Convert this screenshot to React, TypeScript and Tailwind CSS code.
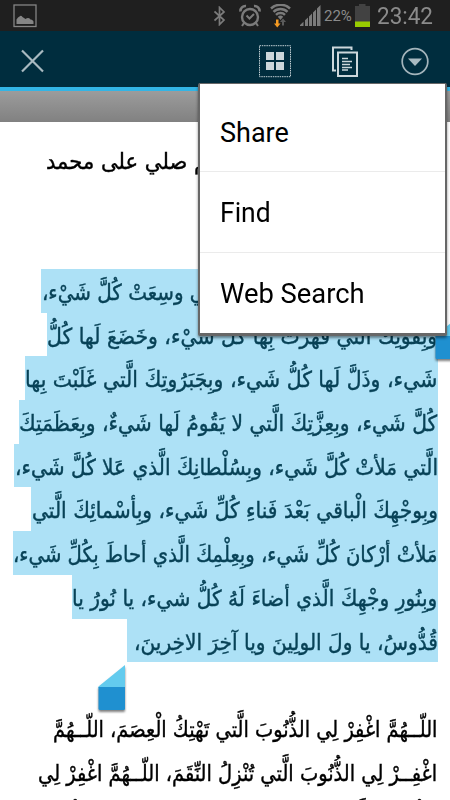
import { ReactNode, useLayoutEffect, useRef, useState } from 'react';
import clsx from 'clsx';

type Line = {
    text: string;
    row: string;
    width: number;
};

const STYLES = {
    arabic: "font-['DejaVu_Sans',sans-serif] text-[22px] leading-[48px] [-webkit-text-stroke:0.4px_currentColor]",
    selectedRow: 'ml-auto h-[43.7px] bg-[#ade1f6] text-[#084257]',
    iconStroke: 'shrink-0 text-[#7b7b7b]',
};

const SELECTED: Line[] = [
    { text: 'اللّـهُمَّ إنّي أسْألُكَ بِرَحْمَتِكَ الَّتي وسِعَتْ كُلَّ شَيْء،', row: 'w-[397px]', width: 396 },
    { text: 'وبِقُوَّتِكَ الَّتي قَهَرْتَ بِها كُلَّ شَيْء، وخَضَعَ لَها كُلُّ', row: 'w-[391px]', width: 390 },
    { text: 'شَيء، وذَلَّ لَها كُلُّ شَيء، وبِجَبَرُوتِكَ الَّتي غَلَبْتَ بِها', row: 'w-[413px]', width: 412 },
    { text: 'كُلَّ شَيء، وبِعِزَّتِكَ الَّتي لا يَقُومُ لَها شَيءٌ، وبِعَظَمَتِكَ', row: 'w-[419px]', width: 418 },
    { text: 'الَّتي مَلأتْ كُلَّ شَيء، وبِسُلْطانِكَ الَّذي عَلا كُلَّ شَيء،', row: 'w-[424px]', width: 423 },
    { text: 'وبِوجْهِكَ الْباقي بَعْدَ فَناءِ كُلِّ شَيء، وبِأسْمائِكَ الَّتي', row: 'w-[407px]', width: 406 },
    { text: 'مَلأتْ أرْكانَ كُلِّ شَيء، وبِعِلْمِكَ الَّذي أحاطَ بِكُلِّ شَيء،', row: 'w-[425px]', width: 424 },
    { text: 'وبِنُورِ وجْهِكَ الَّذي أضاءَ لَهُ كُلُّ شيء، يا نُورُ يا', row: 'w-[366px]', width: 365 },
    { text: 'قُدُّوسُ، يا ولَ الولِينَ ويا آخِرَ الاخِرينَ،', row: 'w-[311px]', width: 304 },
];

const FOLLOWING: Line[] = [
    { text: 'اللّــهُمَّ اغْفِرْ لِي الذُّنُوبَ الَّتي تَهْتِكُ الْعِصَمَ، اللّــهُمَّ', row: 'h-[43.7px]', width: 384 },
    { text: 'اغْفِــرْ لِي الذُّنُوبَ الَّتي تُنْزِلُ النِّقَمَ، اللّــهُمَّ اغْفِرْ لِي', row: 'h-[44px]', width: 399 },
    { text: 'الذُّنُوبَ الَّتي تُغَيِّرُ النِّعَمَ، اللّــهُمَّ اغْفِرْ لي الذُّنُوبَ', row: 'h-[43.7px]', width: 404 },
];

const MENU = [
    { label: 'Share', width: 69, row: 'h-[87px] pt-[11px]' },
    { label: 'Find', width: 51, row: 'h-[81px] border-t border-[#ebebeb] pt-[3px]' },
    { label: 'Web Search', width: 145, row: 'h-[81px] border-t border-[#ebebeb] pt-[3px]' },
];

// Squeezes or stretches one line of text to a fixed width
function FitText({ width, rtl, children }: { width: number; rtl?: boolean; children: ReactNode }) {
    const ref = useRef<HTMLSpanElement>(null);
    const [scale, setScale] = useState(1);

    useLayoutEffect(() => {
        const measure = () => {
            if (ref.current) setScale(width / ref.current.offsetWidth);
        };
        measure();
        document.fonts.ready.then(measure);
    }, [width]);

    return (
        <span
            ref={ref}
            className={clsx('inline-block whitespace-nowrap', rtl ? 'origin-right' : 'origin-left')}
            style={{ transform: `scaleX(${scale})` }}
        >
            {children}
        </span>
    );
}

function StatusBar() {
    return (
        <header className="flex h-[31px] items-center bg-[#1f1f1f] pl-[13px] font-[Roboto,sans-serif] text-[#8b8b8b]">
            <svg width="24" height="24" viewBox="0 0 24 24" fill="none" className="shrink-0 text-[#858585]">
                <rect x="1" y="1" width="22" height="21.5" stroke="currentColor" strokeWidth="1.3" />
                <path d="M3.500 20v-4.500Q5 13 6.500 12.500Q8 11 9.500 13L12.500 15Q15.500 13 17.500 15.500Q20.500 16 20.500 18V20z" fill="currentColor" />
            </svg>
            <svg width="12" height="20" viewBox="0 0 12 20" fill="none" stroke="currentColor" strokeWidth="1.7" className={clsx(STYLES.iconStroke, 'ml-[177px]')}>
                <path d="M0.500 5.5l9.5 8.5L5.500 18.5V1.5L10 6 0.500 14.500" />
            </svg>
            <svg width="22" height="24" viewBox="0 0 22 24" fill="none" stroke="currentColor" className={clsx(STYLES.iconStroke, 'ml-[13px]')}>
                <circle cx="11" cy="13" r="8" strokeWidth="2.400" />
                <path d="M7.500 11.500l3 3 4.500-4.500M5 19l-2 3M17 19l2 3" strokeWidth="2" />
                <path d="M1.500 7.500A5 5 0 0 1 7 2M20.500 7.500A5 5 0 0 0 15 2" strokeWidth="2.600" />
            </svg>
            <svg width="22" height="24" viewBox="0 0 22 24" fill="none" className={clsx(STYLES.iconStroke, 'ml-[9px]')}>
                <path d="M1 4.500a14 14 0 0 1 19 0M3.500 7.800a10 10 0 0 1 14 0M6 10.800a6.500 6.500 0 0 1 9 0" stroke="currentColor" strokeWidth="2.500" />
                <path d="M7.800 12.800a4 4 0 0 1 5.400 0L10.500 16z" fill="currentColor" />
                <path d="M6 15.500h2.500v4h2l-3.250 4-3.250-4h2z" fill="#f59a22" />
                <path d="M12 21.500V18h-2l3-3.500 3 3.500h-2v3.500z" fill="#5b5b5b" />
            </svg>
            <svg width="21" height="21" viewBox="0 0 21 21" fill="currentColor" className={clsx(STYLES.iconStroke, 'ml-[8px]')}>
                <path d="M0 21v-1l3.500-3.200V21zM5 21v-5.700L8 12.500V21zM9 21v-9.500L12 8.500V21zM13 21V7.500L16 4.500V21zM17 21V3.500L20.500 0V21z" />
            </svg>
            <span className="ml-[3px] w-[28px] pt-px text-[15px] leading-none">
                <FitText width={28}>22%</FitText>
            </span>
            <svg width="15" height="23" viewBox="0 0 15 23" className="ml-[3px] shrink-0">
                <path d="M0 2h4V0h6.500v2H15v21H0z" fill="#424242" />
                <rect y="17.500" width="15" height="5.500" fill="#99cc00" />
            </svg>
            <span className="ml-[7px] pt-px text-[24.500px] leading-none">
                <FitText width={56}>23:42</FitText>
            </span>
        </header>
    );
}

function ActionBar() {
    return (
        <div className="flex h-[60px] items-start border-b-4 border-[#33b5e5] bg-[#002d3e] pl-[21px] pt-[14px]">
            <svg width="23" height="33" viewBox="0 0 23 33" fill="none" stroke="#a9bac1" strokeWidth="2.200" className="shrink-0">
                <path d="M1 5.500l21 21M22 5.500l-21 21" />
            </svg>
            <svg width="32" height="33" viewBox="0 0 32 33" className="ml-[215px] shrink-0">
                <rect x="0.500" y="0.700" width="31" height="31" fill="none" stroke="#c3d0d5" strokeDasharray="1.500 0.800" />
                <path d="M7 7h8v8H7zM17 7h8v8h-8zM7 17h8v8H7zM17 17h8v8h-8z" fill="#ccd7db" />
            </svg>
            <svg width="27" height="33" viewBox="0 0 27 33" fill="none" stroke="#ccd7db" strokeWidth="2" className="ml-[40px] shrink-0">
                <path d="M5 25.500H2V2.500h18.500V5" />
                <rect x="7" y="7.500" width="19" height="23.500" />
                <path d="M11 13.500h6M11 16.500h10M11 19.500h8M11 22.500h10M11 25h6" strokeWidth="1.300" />
            </svg>
            <svg width="28" height="33" viewBox="0 0 28 33" className="ml-[43px] shrink-0">
                <circle cx="14" cy="16.500" r="12.800" fill="none" stroke="#a4b5bc" strokeWidth="1.700" />
                <path d="M7 13.500h14l-7 7.500z" fill="#a9bac1" />
            </svg>
        </div>
    );
}

function OverflowMenu() {
    return (
        <div className="absolute left-[198px] top-[83px] z-20 w-[249px] rounded-[2px] border-x-2 border-b-[3px] border-t border-[#676767] bg-white shadow-[0_2px_3px_rgba(0,0,0,0.45)]">
            {MENU.map((item) => (
                <div key={item.label} className={clsx('flex items-center pl-[20px] font-[Roboto,sans-serif] text-[27px] text-black', item.row)}>
                    <FitText width={item.width}>{item.label}</FitText>
                </div>
            ))}
        </div>
    );
}

function Handle({ className }: { className: string }) {
    return (
        <svg width="27" height="50" viewBox="0 0 27 50" className={clsx('absolute z-10 overflow-visible drop-shadow-[0_2px_1px_rgba(0,0,0,0.5)]', className)}>
            <path d="M0.500 21.500L27 0v23H0.500z" fill="#63cbee" />
            <path d="M0.500 22H27v21.500q0 1.500-1.500 1.500H2Q0.500 45 0.500 43.500z" fill="#1f90d0" />
        </svg>
    );
}

export default function App() {
    return (
        <div className="relative h-[800px] w-[450px] overflow-hidden bg-white">
            <StatusBar />
            <ActionBar />
            <div className="h-[31px] bg-gradient-to-b from-[#9c9c9c] to-[#818181]" />

            <main dir="rtl" lang="ar" className={clsx('pr-[12.5px] text-black', STYLES.arabic)}>
                <p className="h-[147px] pr-[200px] pt-[16px]">
                    <FitText width={191} rtl>اللهم صلي على محمد</FitText>
                </p>
                <div dir="ltr" className="w-[437.5px]">
                    {SELECTED.map((line) => (
                        <div key={line.text} dir="rtl" className={clsx(STYLES.selectedRow, line.row)}>
                            <FitText width={line.width} rtl>{line.text}</FitText>
                        </div>
                    ))}
                </div>
                <div className="pt-[43.700px]">
                    {FOLLOWING.map((line) => (
                        <div key={line.text} className={line.row}>
                            <FitText width={line.width} rtl>{line.text}</FitText>
                        </div>
                    ))}
                </div>
            </main>

            <Handle className="left-[435px] top-[314px]" />
            <Handle className="left-[98px] top-[665px]" />
            <OverflowMenu />
        </div>
    );
}
